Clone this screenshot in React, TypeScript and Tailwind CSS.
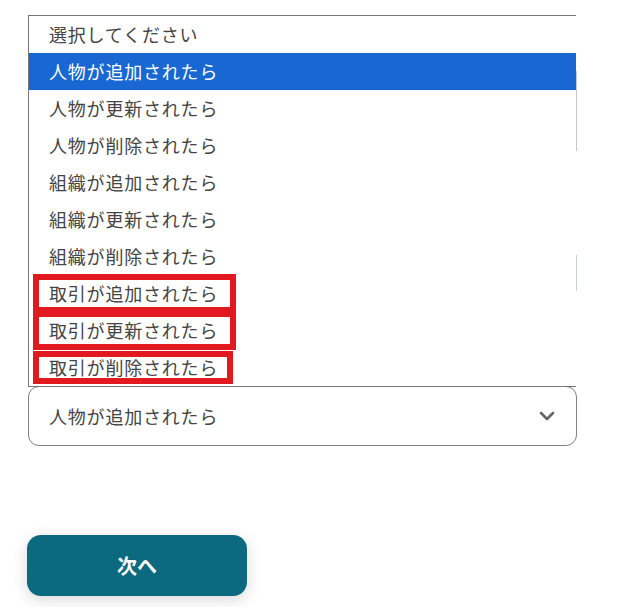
import React from "react";

const options = [
  "選択してください",
  "人物が追加されたら",
  "人物が更新されたら",
  "人物が削除されたら",
  "組織が追加されたら",
  "組織が更新されたら",
  "組織が削除されたら",
];

const marked = [
  { label: "取引が追加されたら", box: "h-[27px] w-[191px]" },
  { label: "取引が更新されたら", box: "h-[27px] w-[191px]" },
  { label: "取引が削除されたら", box: "h-[21px] w-[188px]" },
];

export default function App() {
  return (
    <div className="w-[622px] h-[607px] bg-white font-['Noto_Sans_CJK_JP','Noto_Sans',sans-serif] overflow-hidden">
      <div className="pt-[15px] pl-[28px]">
        <div className="relative z-10 w-[548px] border-t border-l border-b border-[#767676] bg-white">
          {options.map((o, i) => (
            <div
              key={o}
              className={
                i === 1
                  ? "h-[37px] flex items-center pl-[20px] bg-[#1967d2] text-white text-[18px] tracking-[0.8px]"
                  : "h-[37px] flex items-center pl-[20px] text-[#444] text-[18px] tracking-[0.8px]"
              }
            >
              {o}
            </div>
          ))}
          {marked.map((m) => (
            <div key={m.label} className="h-[37px] flex items-center pl-[10px]">
              <span
                className={`${m.box} flex items-center pl-[10px] outline-[6px] outline-solid outline-[#e21a1f] text-[#444] text-[18px] tracking-[0.8px]`}
              >
                {m.label}
              </span>
            </div>
          ))}
          <div className="absolute right-[-1px] top-[55px] w-[1px] h-[80px] bg-[#c6c6c6]" />
          <div className="absolute right-[-1px] top-[239px] w-[1px] h-[36px] bg-[#ccd0d8]" />
        </div>
        <div className="-mt-[1px] w-[549px] h-[60px] border border-[#808080] rounded-[11px] flex items-center justify-between pl-[20px] pr-[20px]">
          <span className="text-[18px] text-[#444] tracking-[0.8px]">人物が追加されたら</span>
          <svg width="16" height="10" viewBox="0 0 16 10" className="mr-[1px]">
            <polyline points="2,2 8,8 14,2" fill="none" stroke="#666" strokeWidth="2.6" strokeLinecap="round" strokeLinejoin="round" />
          </svg>
        </div>
        <button className="mt-[89px] -ml-[1px] w-[220px] h-[61px] rounded-[14px] bg-[#0b6980] text-white text-[20px] font-bold flex items-center justify-center shadow-[0_4px_16px_rgba(0,0,0,0.15)]">
          次へ
        </button>
      </div>
    </div>
  );
}
